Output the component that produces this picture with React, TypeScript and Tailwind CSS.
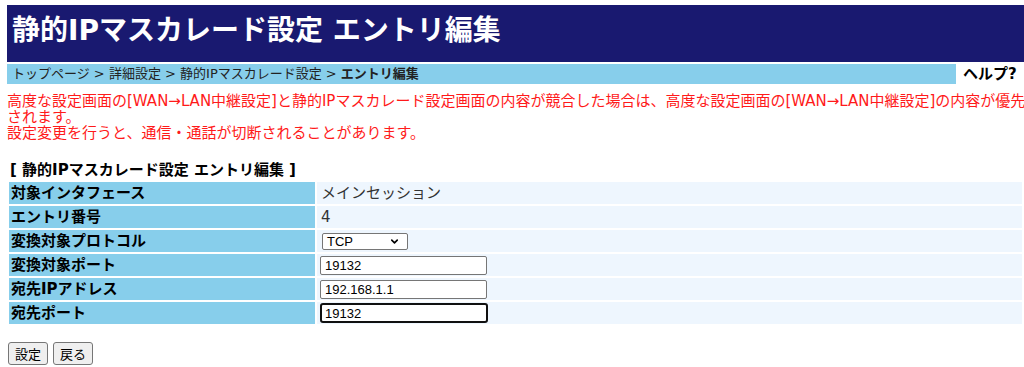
import { ChevronDown } from "lucide-react";

const FONT = "font-['DejaVu_Sans','Noto_Sans_CJK_JP',sans-serif]";
const CTRL = "font-['Liberation_Sans','Noto_Sans_CJK_JP',sans-serif]";

const ROWS: { label: string; kind: "text" | "select" | "input" | "focus"; value: string }[] = [
  { label: "対象インタフェース", kind: "text", value: "メインセッション" },
  { label: "エントリ番号", kind: "text", value: "4" },
  { label: "変換対象プロトコル", kind: "select", value: "TCP" },
  { label: "変換対象ポート", kind: "input", value: "19132" },
  { label: "宛先IPアドレス", kind: "input", value: "192.168.1.1" },
  { label: "宛先ポート", kind: "focus", value: "19132" },
];

function ValueCell({ kind, value }: { kind: string; value: string }) {
  if (kind === "text") {
    return <span className="pl-[4px] text-[15px] text-[#333]">{value}</span>;
  }
  if (kind === "select") {
    return (
      <div className="ml-[5px] flex h-[17px] w-[86px] items-center justify-between rounded-[2px] border border-[#767676] bg-white pl-[4px] pr-[7px]">
        <span className={`${CTRL} text-[13px] leading-none text-black`}>{value}</span>
        <ChevronDown size={11} strokeWidth={3.5} className="text-black" />
      </div>
    );
  }
  return (
    <div
      className={
        kind === "focus"
          ? "ml-[3px] flex h-[20px] w-[168px] items-center rounded-[3px] border-2 border-[#101010] bg-white pl-[3px]"
          : "ml-[3px] flex h-[19px] w-[167px] items-center rounded-[2px] border border-[#767676] bg-white pl-[4px]"
      }
    >
      <span className={`${CTRL} text-[13px] leading-none text-black`}>{value}</span>
    </div>
  );
}

export default function App() {
  return (
    <div className={`${FONT} min-h-[367px] bg-white pl-[7px] pt-[5px] text-black`}>
      <div className="flex h-[57px] items-center bg-[#191970] pb-[5px] pl-[5px]">
        <h1 className="whitespace-nowrap text-[28px] font-bold leading-none text-white">
          静的IPマスカレード設定 エントリ編集
        </h1>
      </div>

      <div className="mt-[2px] flex h-[20px] items-center">
        <div className="flex h-full flex-1 items-center bg-[#87ceeb] pl-[5px] text-[13px] text-[#222]">
          トップページ &gt; 詳細設定 &gt; 静的IPマスカレード設定 &gt; <span className="ml-[4px] font-bold">エントリ編集</span>
        </div>
        <div className="w-[68px] whitespace-nowrap pl-[7px] text-[15px] font-bold">ヘルプ?</div>
      </div>

      <p className="mt-[9px] whitespace-nowrap text-[15px] leading-[16px] text-[#ff1a1a]">
        高度な設定画面の[WAN→LAN中継設定]と静的IPマスカレード設定画面の内容が競合した場合は、高度な設定画面の[WAN→LAN中継設定]の内容が優先
        <br />
        されます。
        <br />
        設定変更を行うと、通信・通話が切断されることがあります。
      </p>

      <h2 className="mt-[21px] pl-[3px] text-[15px] font-bold leading-[16px]">[ 静的IPマスカレード設定 エントリ編集 ]</h2>

      <table className="mt-[2px] w-full border-separate border-spacing-[2px]">
        <tbody>
          {ROWS.map((row) => (
            <tr key={row.label}>
              <td className="h-[22px] w-[306px] bg-[#87ceeb] p-0 pl-[2px] text-[15px] font-bold leading-none">
                {row.label}
              </td>
              <td className="h-[22px] bg-[#eef6fe] p-0 leading-none">
                <ValueCell kind={row.kind} value={row.value} />
              </td>
            </tr>
          ))}
        </tbody>
      </table>

      <div className="mt-[16px] flex gap-[5px] pl-[1px]">
        <button className="h-[23px] w-[40px] rounded-[3px] border border-[#767676] bg-[#efefef] text-[13px] font-['Noto_Sans_CJK_JP',sans-serif] text-black">
          設定
        </button>
        <button className="h-[23px] w-[40px] rounded-[3px] border border-[#767676] bg-[#efefef] text-[13px] font-['Noto_Sans_CJK_JP',sans-serif] text-black">
          戻る
        </button>
      </div>
    </div>
  );
}
